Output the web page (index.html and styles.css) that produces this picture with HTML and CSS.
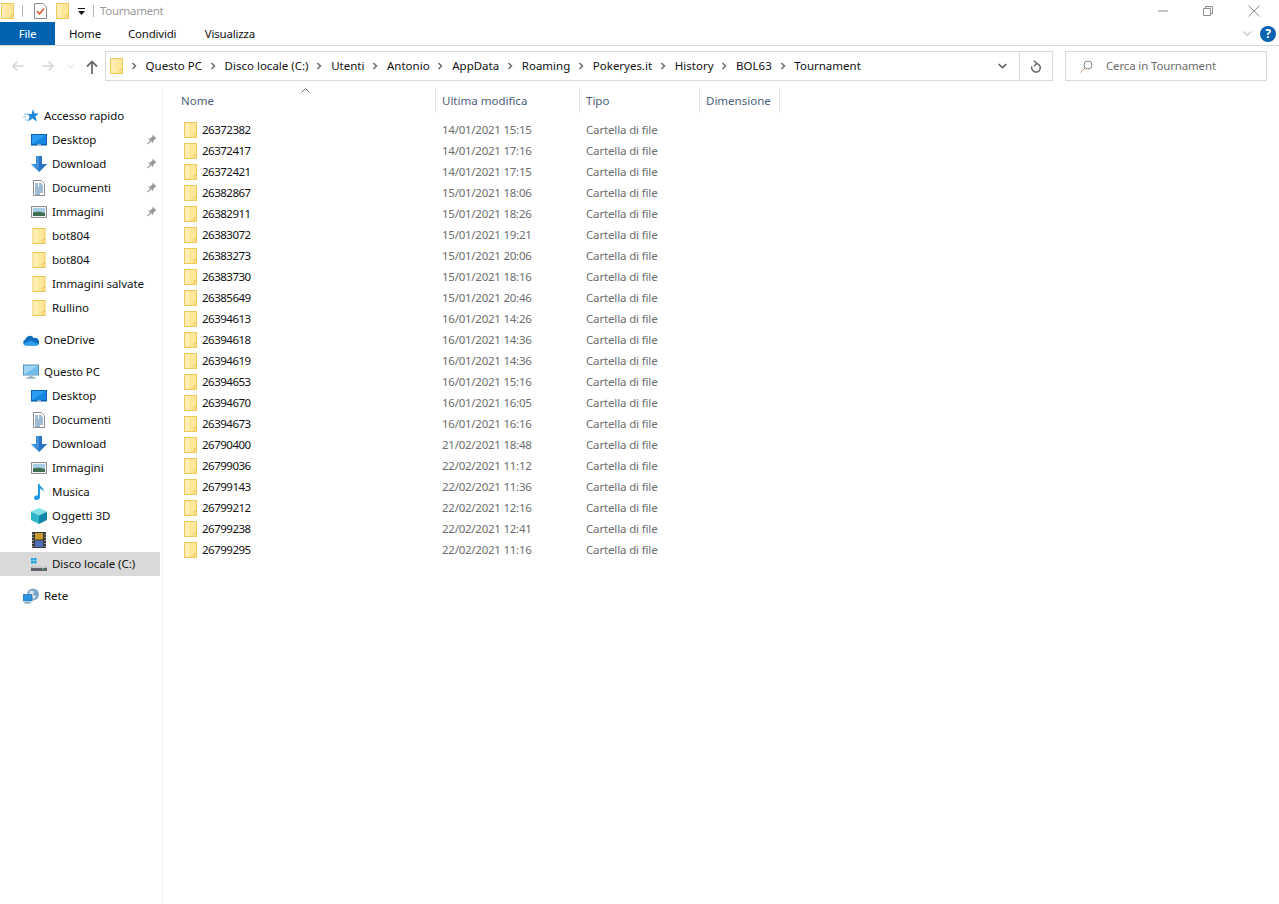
FILE: index.html
```html
<!DOCTYPE html>
<html lang="en">
<head>
  <meta charset="UTF-8">
  <title>Tournament</title>
  <link rel="stylesheet" href="styles.css">
</head>
<body>
  <svg class="defs" width="0" height="0">
    <symbol id="folder" viewBox="0 0 13 16">
      <rect x=".5" y=".5" width="12" height="15" fill="#ffe79c" stroke="#eec95a"/>
      <rect x="1" y="1" width="4" height="14" fill="#ffedb3"/>
      <path d="M10 15.5v-4h2.5" fill="none" stroke="#eec95a"/>
    </symbol>
    <symbol id="chev" viewBox="0 0 6 8">
      <path d="M1.5 1l3 3-3 3" fill="none" stroke="#6d6d6d" stroke-width="1.5"/>
    </symbol>
    <symbol id="pin" viewBox="0 0 12 12">
      <path d="M7 .5l4.500 4.500-1.500.5-2 2-.5 2.500-2-2-3.500 3.500-1-1 3.500-3.500-2-2 2.500-.5 2-2z" fill="#9a9a9a"/>
    </symbol>
    <symbol id="desktop" viewBox="0 0 16 12">
      <rect width="16" height="11.500" fill="#0a5fb4"/>
      <rect x="1" y="1" width="14" height="9" fill="#2b9df0"/>
      <path d="M1 10L15 1v9z" fill="#1787e0"/>
      <path d="M6 10.800h4" stroke="#fff" stroke-width=".7"/>
    </symbol>
    <symbol id="download" viewBox="0 0 16 16">
      <path d="M5 0h6v8h5l-8 8-8-8h5z" fill="#3f8fdc"/>
      <path d="M8 0h3v8h5l-8 8z" fill="#2a74c0"/>
    </symbol>
    <symbol id="docs" viewBox="0 0 12 16">
      <path d="M.5.500h8l3 3v12H.5z" fill="#fff" stroke="#8c8c8c"/>
      <path d="M2 4h3M2 6h3M2 8h8M2 10h8M2 12h8M2 14h5M6 4h3M6 6h4" stroke="#3f78a8"/>
    </symbol>
    <symbol id="pics" viewBox="0 0 16 12">
      <rect x=".5" y=".5" width="15" height="11" fill="#f2f2f2" stroke="#8d8d8d"/>
      <rect x="2" y="2" width="12" height="8" fill="#a9cde8"/>
      <path d="M2 7c3-2 7-1 12 0v3H2z" fill="#3f6f52"/>
    </symbol>
    <symbol id="star" viewBox="0 0 16 16">
      <path d="M10 1l1.500 4.500H16l-3.600 3 1.500 5-4.400-3-4.500 3 1.700-5-2.600-2.500h4.500z" fill="#1f86d9"/>
      <path d="M1 6h4M0 9h3M2 12h3" stroke="#7fbdea" stroke-width="1"/>
    </symbol>
    <symbol id="cloud" viewBox="0 0 16 11">
      <path d="M3 11a3 3 0 0 1-.5-5.900A4.500 4.500 0 0 1 10.800 3.500 3.700 3.700 0 0 1 13.500 11z" fill="#0f6cbd"/>
      <path d="M3 11c-1 0-2-.5-2.500-1.500L7 6l8.800 3.500c-.5 1-1.300 1.500-2.300 1.500z" fill="#2a9df0"/>
    </symbol>
    <symbol id="pc" viewBox="0 0 16 15">
      <rect x=".5" y=".5" width="15" height="10" fill="#9fd4f5" stroke="#5a93b8"/>
      <path d="M1 10L15 1v9z" fill="#6fbdec"/>
      <path d="M6.500 11h3v2h-3z" fill="#9bb0bd"/>
      <path d="M3.500 13.500h9" stroke="#7a97a8" stroke-width="1.200"/>
    </symbol>
    <symbol id="music" viewBox="0 0 12 16">
      <path d="M5 0h1.500c.5 3 5 3.500 4 8-.5-2-2-3-3.500-3.200V13c0 1.700-1.500 3-3.500 3S1 15 1 13.500 2.800 11 5 11.200z" fill="#1d9be6"/>
    </symbol>
    <symbol id="cube" viewBox="0 0 16 16">
      <path d="M8 0l8 3.500-8 4-8-4z" fill="#7fe0e6"/>
      <path d="M0 3.500l8 4V16l-8-4z" fill="#2fb4c8"/>
      <path d="M16 3.500l-8 4V16l8-4z" fill="#1285a8"/>
    </symbol>
    <symbol id="video" viewBox="0 0 14 16">
      <rect width="14" height="16" fill="#3a3a3a"/>
      <rect x="3" y="1" width="8" height="6.500" fill="#c79a2e"/>
      <rect x="3" y="8.500" width="8" height="6.500" fill="#4f6fb8"/>
      <path d="M1 2v1M1 5v1M1 8v1M1 11v1M1 14v1M13 2v1M13 5v1M13 8v1M13 11v1M13 14v1" stroke="#fff"/>
    </symbol>
    <symbol id="disk" viewBox="0 0 16 14">
      <path d="M0 1h2.500v2.500H0zM3 1h2.500v2.500H3zM0 4h2.500v2.500H0zM3 4h2.500v2.500H3z" fill="#19a5e8"/>
      <path d="M2 9h12l2 2v3H0v-3z" fill="#5f6368"/>
      <path d="M2 9h12l1.500 2H.5z" fill="#c9cdd0"/>
      <rect x="11" y="11.500" width="2" height="1.200" fill="#5fd35f"/>
    </symbol>
    <symbol id="net" viewBox="0 0 16 15">
      <circle cx="10" cy="6" r="6" fill="#7ea6c9"/>
      <path d="M7 2l4 1-1 3 3 2-3 3-1-4-3-1z" fill="#dfe9f2"/>
      <rect y="6" width="9" height="6.500" fill="#2b93e0" stroke="#1b6cab" stroke-width=".6"/>
      <path d="M1.500 14.300h6" stroke="#5c8fb5" stroke-width="1.300"/>
    </symbol>
    <symbol id="task" viewBox="0 0 13 16">
      <path d="M.5.500h8.500l3.500 3.500v11.500H.5z" fill="#fdfdfd" stroke="#8e8e8e"/>
      <path d="M3 8l2.500 3L10 5.500" fill="none" stroke="#e0562a" stroke-width="1.500"/>
    </symbol>
  </svg>

  <div class="titlebar">
    <svg class="ico-folder"><use href="#folder"/></svg>
    <span class="qat-sep"></span>
    <svg class="ico-task"><use href="#task"/></svg>
    <svg class="ico-folder qat-folder"><use href="#folder"/></svg>
    <svg class="qat-drop" width="7" height="7" viewBox="0 0 7 7"><path d="M0 0h7v1H0zM0 3h7L3.500 7z" fill="#111"/></svg>
    <span class="qat-sep qat-sep2"></span>
    <span class="win-title">Tournament</span>
    <div class="win-btns">
      <svg width="10" height="10" viewBox="0 0 10 10"><path d="M0 5h10" stroke="#8c8c8c"/></svg>
      <svg width="10" height="10" viewBox="0 0 10 10"><path d="M.5 2.500h7v7h-7zM2.500 2.500v-2h7v7h-2" fill="none" stroke="#8c8c8c"/></svg>
      <svg width="12" height="12" viewBox="0 0 12 12"><path d="M.5.500l11 11M11.500.500l-11 11" stroke="#8c8c8c"/></svg>
    </div>
  </div>

  <div class="ribbon">
    <div class="tab tab-file">File</div>
    <div class="tab tab-home">Home</div>
    <div class="tab tab-share">Condividi</div>
    <div class="tab tab-view">Visualizza</div>
    <div class="ribbon-right">
      <svg width="10" height="6" viewBox="0 0 10 6"><path d="M1 .5l4 4 4-4" fill="none" stroke="#9a9a9a"/></svg>
      <span class="help">?</span>
    </div>
  </div>

  <div class="navbar">
    <div class="nav-btns">
      <svg class="nav-back" width="14" height="12" viewBox="0 0 14 12"><path d="M13 6H2M6.500 1.500L2 6l4.500 4.500" fill="none" stroke="#d6d6d6" stroke-width="1.500"/></svg>
      <svg class="nav-fwd" width="14" height="12" viewBox="0 0 14 12"><path d="M1 6h11M7.500 1.500L12 6l-4.500 4.500" fill="none" stroke="#d6d6d6" stroke-width="1.500"/></svg>
      <svg class="nav-down" width="7" height="5" viewBox="0 0 7 5"><path d="M.5 1l3 3 3-3" fill="none" stroke="#d6d6d6"/></svg>
      <svg class="nav-up" width="12" height="14" viewBox="0 0 12 14"><path d="M6 14V2M1 6.500L6 1.500l5 5" fill="none" stroke="#6d6d6d" stroke-width="1.800"/></svg>
    </div>
    <div class="address">
      <svg class="ico-folder addr-folder"><use href="#folder"/></svg>
      <div class="crumbs">
        <svg class="chev"><use href="#chev"/></svg><span>Questo PC</span>
        <svg class="chev"><use href="#chev"/></svg><span>Disco locale (C:)</span>
        <svg class="chev"><use href="#chev"/></svg><span>Utenti</span>
        <svg class="chev"><use href="#chev"/></svg><span>Antonio</span>
        <svg class="chev"><use href="#chev"/></svg><span>AppData</span>
        <svg class="chev"><use href="#chev"/></svg><span>Roaming</span>
        <svg class="chev"><use href="#chev"/></svg><span>Pokeryes.it</span>
        <svg class="chev"><use href="#chev"/></svg><span>History</span>
        <svg class="chev"><use href="#chev"/></svg><span>BOL63</span>
        <svg class="chev"><use href="#chev"/></svg><span>Tournament</span>
      </div>
      <div class="addr-drop">
        <svg width="9" height="6" viewBox="0 0 9 6"><path d="M.7 1l3.800 3.800L8.300 1" fill="none" stroke="#555" stroke-width="1.500"/></svg>
      </div>
      <div class="addr-refresh">
        <svg width="12" height="13" viewBox="0 0 12 13"><path d="M6 3.500a4.300 4.300 0 1 1-4.100 3" fill="none" stroke="#666" stroke-width="1.500"/><path d="M4 .8l2.700 2.700L4 6.200" fill="none" stroke="#666" stroke-width="1.400"/></svg>
      </div>
    </div>
    <div class="search">
      <svg width="13" height="13" viewBox="0 0 13 13"><circle cx="8" cy="5" r="4" fill="none" stroke="#8a8a8a"/><path d="M5 8l-4.500 4.500" stroke="#c98f6a"/></svg>
      <span class="search-text">Cerca in Tournament</span>
    </div>
  </div>

  <div class="main">
    <nav class="sidebar">
      <div class="nav-row top"><svg class="ico"><use href="#star"/></svg>Accesso rapido</div>
      <div class="nav-row"><svg class="ico"><use href="#desktop"/></svg>Desktop<svg class="pin"><use href="#pin"/></svg></div>
      <div class="nav-row"><svg class="ico"><use href="#download"/></svg>Download<svg class="pin"><use href="#pin"/></svg></div>
      <div class="nav-row"><svg class="ico"><use href="#docs"/></svg>Documenti<svg class="pin"><use href="#pin"/></svg></div>
      <div class="nav-row"><svg class="ico"><use href="#pics"/></svg>Immagini<svg class="pin"><use href="#pin"/></svg></div>
      <div class="nav-row"><svg class="ico"><use href="#folder"/></svg>bot804</div>
      <div class="nav-row"><svg class="ico"><use href="#folder"/></svg>bot804</div>
      <div class="nav-row"><svg class="ico"><use href="#folder"/></svg>Immagini salvate</div>
      <div class="nav-row"><svg class="ico"><use href="#folder"/></svg>Rullino</div>
      <div class="nav-row top gap"><svg class="ico"><use href="#cloud"/></svg>OneDrive</div>
      <div class="nav-row top gap"><svg class="ico"><use href="#pc"/></svg>Questo PC</div>
      <div class="nav-row"><svg class="ico"><use href="#desktop"/></svg>Desktop</div>
      <div class="nav-row"><svg class="ico"><use href="#docs"/></svg>Documenti</div>
      <div class="nav-row"><svg class="ico"><use href="#download"/></svg>Download</div>
      <div class="nav-row"><svg class="ico"><use href="#pics"/></svg>Immagini</div>
      <div class="nav-row"><svg class="ico"><use href="#music"/></svg>Musica</div>
      <div class="nav-row"><svg class="ico"><use href="#cube"/></svg>Oggetti 3D</div>
      <div class="nav-row"><svg class="ico"><use href="#video"/></svg>Video</div>
      <div class="nav-row selected"><svg class="ico"><use href="#disk"/></svg>Disco locale (C:)</div>
      <div class="nav-row top gap"><svg class="ico"><use href="#net"/></svg>Rete</div>
    </nav>

    <section class="files">
      <div class="head">
        <div class="col col-name">Nome<svg class="sort" width="9" height="5" viewBox="0 0 9 5"><path d="M.5 4.500l4-4 4 4" fill="none" stroke="#777"/></svg></div>
        <div class="col">Ultima modifica</div>
        <div class="col">Tipo</div>
        <div class="col">Dimensione</div>
      </div>
      <div class="rows">
        <div class="row"><div class="name"><svg class="ico-folder"><use href="#folder"/></svg>26372382</div><div class="date">14/01/2021 15:15</div><div class="kind">Cartella di file</div></div>
        <div class="row"><div class="name"><svg class="ico-folder"><use href="#folder"/></svg>26372417</div><div class="date">14/01/2021 17:16</div><div class="kind">Cartella di file</div></div>
        <div class="row"><div class="name"><svg class="ico-folder"><use href="#folder"/></svg>26372421</div><div class="date">14/01/2021 17:15</div><div class="kind">Cartella di file</div></div>
        <div class="row"><div class="name"><svg class="ico-folder"><use href="#folder"/></svg>26382867</div><div class="date">15/01/2021 18:06</div><div class="kind">Cartella di file</div></div>
        <div class="row"><div class="name"><svg class="ico-folder"><use href="#folder"/></svg>26382911</div><div class="date">15/01/2021 18:26</div><div class="kind">Cartella di file</div></div>
        <div class="row"><div class="name"><svg class="ico-folder"><use href="#folder"/></svg>26383072</div><div class="date">15/01/2021 19:21</div><div class="kind">Cartella di file</div></div>
        <div class="row"><div class="name"><svg class="ico-folder"><use href="#folder"/></svg>26383273</div><div class="date">15/01/2021 20:06</div><div class="kind">Cartella di file</div></div>
        <div class="row"><div class="name"><svg class="ico-folder"><use href="#folder"/></svg>26383730</div><div class="date">15/01/2021 18:16</div><div class="kind">Cartella di file</div></div>
        <div class="row"><div class="name"><svg class="ico-folder"><use href="#folder"/></svg>26385649</div><div class="date">15/01/2021 20:46</div><div class="kind">Cartella di file</div></div>
        <div class="row"><div class="name"><svg class="ico-folder"><use href="#folder"/></svg>26394613</div><div class="date">16/01/2021 14:26</div><div class="kind">Cartella di file</div></div>
        <div class="row"><div class="name"><svg class="ico-folder"><use href="#folder"/></svg>26394618</div><div class="date">16/01/2021 14:36</div><div class="kind">Cartella di file</div></div>
        <div class="row"><div class="name"><svg class="ico-folder"><use href="#folder"/></svg>26394619</div><div class="date">16/01/2021 14:36</div><div class="kind">Cartella di file</div></div>
        <div class="row"><div class="name"><svg class="ico-folder"><use href="#folder"/></svg>26394653</div><div class="date">16/01/2021 15:16</div><div class="kind">Cartella di file</div></div>
        <div class="row"><div class="name"><svg class="ico-folder"><use href="#folder"/></svg>26394670</div><div class="date">16/01/2021 16:05</div><div class="kind">Cartella di file</div></div>
        <div class="row"><div class="name"><svg class="ico-folder"><use href="#folder"/></svg>26394673</div><div class="date">16/01/2021 16:16</div><div class="kind">Cartella di file</div></div>
        <div class="row"><div class="name"><svg class="ico-folder"><use href="#folder"/></svg>26790400</div><div class="date">21/02/2021 18:48</div><div class="kind">Cartella di file</div></div>
        <div class="row"><div class="name"><svg class="ico-folder"><use href="#folder"/></svg>26799036</div><div class="date">22/02/2021 11:12</div><div class="kind">Cartella di file</div></div>
        <div class="row"><div class="name"><svg class="ico-folder"><use href="#folder"/></svg>26799143</div><div class="date">22/02/2021 11:36</div><div class="kind">Cartella di file</div></div>
        <div class="row"><div class="name"><svg class="ico-folder"><use href="#folder"/></svg>26799212</div><div class="date">22/02/2021 12:16</div><div class="kind">Cartella di file</div></div>
        <div class="row"><div class="name"><svg class="ico-folder"><use href="#folder"/></svg>26799238</div><div class="date">22/02/2021 12:41</div><div class="kind">Cartella di file</div></div>
        <div class="row"><div class="name"><svg class="ico-folder"><use href="#folder"/></svg>26799295</div><div class="date">22/02/2021 11:16</div><div class="kind">Cartella di file</div></div>
      </div>
    </section>
  </div>
</body>
</html>
```

FILE: styles.css
```css
html, body {
  margin: 0;
  height: 100%;
  overflow: hidden;
}

body {
  background: #fff;
  color: #111;
  font-family: "Noto Sans", "Open Sans", sans-serif;
  font-size: 11.5px;
}

.defs {
  position: absolute;
}

/* title bar */
.titlebar {
  display: flex;
  align-items: center;
  height: 22px;
  padding-left: 1px;
}

.ico-folder {
  width: 13px;
  height: 16px;
  flex: none;
}

.ico-task {
  width: 13px;
  height: 16px;
  margin-left: 11px;
}

.qat-sep {
  width: 1px;
  height: 12px;
  margin-left: 8px;
  background: #b5b5b5;
}

.qat-folder {
  margin-left: 9px;
}

.qat-drop {
  margin-left: 9px;
}

.qat-sep2 {
  margin-left: 8px;
}

.win-title {
  margin: 0 0 2px 6px;
  color: #9a9a9a;
  letter-spacing: -0.3px;
}

.win-btns {
  display: flex;
  align-items: center;
  gap: 35px;
  margin-left: auto;
  padding-right: 19px;
}

/* ribbon tabs */
.ribbon {
  display: flex;
  align-items: center;
  height: 23px;
  border-bottom: 1px solid #dadada;
}

.tab {
  height: 100%;
  line-height: 23px;
  text-align: center;
  letter-spacing: -0.2px;
}

.tab-file {
  width: 55px;
  background: #0063b1;
  color: #fff;
}

.tab-home {
  margin-left: 14px;
}

.tab-share {
  margin-left: 27px;
}

.tab-view {
  margin-left: 28.500px;
}

.ribbon-right {
  display: flex;
  align-items: center;
  gap: 8px;
  margin-left: auto;
  padding-right: 3px;
}

.help {
  width: 16px;
  height: 16px;
  border-radius: 50%;
  background: #0a62b0;
  color: #fff;
  font-weight: bold;
  font-size: 12px;
  line-height: 16px;
  text-align: center;
}

/* address row */
.navbar {
  display: flex;
  align-items: center;
  height: 40px;
}

.nav-btns {
  position: relative;
  flex: none;
  width: 105px;
  height: 100%;
}

.nav-btns svg {
  position: absolute;
}

.nav-back { left: 11px; top: 14px; }
.nav-fwd { left: 41px; top: 14px; }
.nav-down { left: 67px; top: 18px; }
.nav-up { left: 86px; top: 14px; }

.address {
  display: flex;
  align-items: center;
  flex: none;
  width: 946px;
  height: 28px;
  border: 1px solid #d9d9d9;
}

.addr-folder {
  margin-left: 4px;
}

.crumbs {
  display: flex;
  align-items: center;
  flex: 1;
  padding-bottom: 2px;
  white-space: nowrap;
}

.chev {
  width: 6px;
  height: 8px;
  margin: 2px 8.800px 0 7.800px;
  flex: none;
}

.addr-drop {
  display: flex;
  align-items: center;
  justify-content: center;
  width: 33px;
  height: 100%;
  border-right: 1px solid #d9d9d9;
}

.addr-refresh {
  display: flex;
  align-items: center;
  justify-content: center;
  width: 32px;
}

.search {
  display: flex;
  align-items: center;
  gap: 13px;
  flex: none;
  width: 186px;
  height: 28px;
  margin-left: 12px;
  padding-left: 14px;
  border: 1px solid #d9d9d9;
  color: #6d6d6d;
}

.search-text {
  margin-bottom: 2px;
  letter-spacing: -0.15px;
}

/* sidebar */
.main {
  display: flex;
  height: 818px;
}

.sidebar {
  flex: none;
  width: 162px;
  padding-top: 18px;
  border-right: 1px solid #f0f0f0;
  box-sizing: content-box;
}

.nav-row {
  display: flex;
  align-items: center;
  width: 108px;
  height: 22px;
  padding: 0 0 2px 52px;
  position: relative;
  white-space: nowrap;
  letter-spacing: -0.05px;
}

.nav-row.top {
  width: 116px;
  padding-left: 44px;
}

.nav-row.gap {
  margin-top: 8px;
}

.nav-row.selected {
  background: #d9d9d9;
}

.ico {
  position: absolute;
  left: 31px;
  top: 4px;
  width: 16px;
  height: 16px;
}

.top .ico {
  left: 23px;
}

.pin {
  position: absolute;
  left: 146px;
  top: 6px;
  width: 11px;
  height: 11px;
}

/* file list */
.files {
  flex: 1;
}

.head,
.row {
  display: grid;
  grid-template-columns: 273px 144px 120px 80px;
}

.head {
  height: 25px;
  margin-top: 2px;
  color: #4c607a;
}

.col {
  position: relative;
  padding-left: 6px;
  line-height: 25px;
  border-right: 1px solid #e5e5e5;
}

.col-name {
  padding-left: 18px;
}

.sort {
  position: absolute;
  left: 138px;
  top: 0;
}

.rows {
  margin-top: 6px;
}

.row {
  height: 21px;
  line-height: 21px;
  color: #6d6d6d;
}

.row > div {
  padding-left: 6px;
}

.row .date {
  letter-spacing: -0.25px;
}

.row .kind {
  letter-spacing: -0.15px;
}

.row .name {
  display: flex;
  align-items: center;
  gap: 5px;
  padding-left: 21px;
  color: #111;
  letter-spacing: -0.5px;
}
```
